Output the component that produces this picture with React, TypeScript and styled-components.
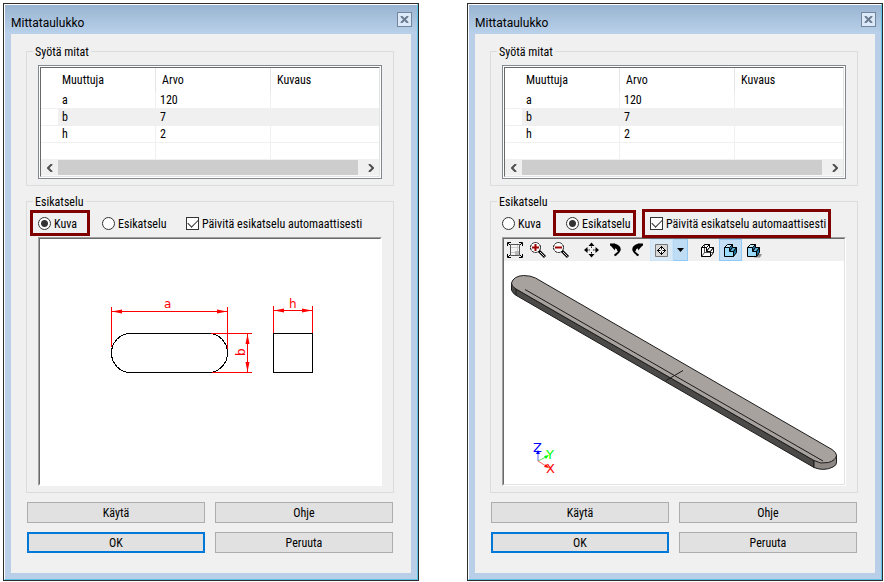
import React, { useId, useState } from "react";
import styled, { createGlobalStyle, css } from "styled-components";

const GlobalStyle = createGlobalStyle`
  * { box-sizing: border-box; }
  body {
    margin: 0;
    background: #fff;
    color: #000;
    font-family: "Roboto Condensed", Roboto, "Liberation Sans", sans-serif;
    font-size: 12px;
    line-height: 17px;
  }
`;

const Page = styled.main`
  display: grid;
  grid-template-columns: 1fr 1fr;
  gap: 48px;
  align-items: start;
  padding: 3px 1px 1px 3px;
`;

const Window = styled.section`
  min-width: 0;
  border: 1px solid #2b2b2b;
`;

const Frame = styled.div`
  border: 1px solid;
  border-color: #fff #5cc3e6 #5cc3e6 #fff;
  background: #b9cfe8;
`;

const TitleBar = styled.header`
  display: flex;
  align-items: center;
  justify-content: space-between;
  height: 29px;
  padding: 0 5px 0 6px;
  background: linear-gradient(#99b4d1, #b9d1ea);
`;

const Title = styled.h2`
  margin: 0;
  padding-top: 7px;
  font-family: Roboto, "Open Sans", sans-serif;
  font-size: 12px;
  font-weight: 400;
`;

const CloseButton = styled.button`
  display: grid;
  place-items: center;
  width: 15px;
  height: 15px;
  padding: 0;
  border: 1px solid #73859b;
  background: #dce9f8;
`;

const Body = styled.div`
  margin: 0 6px 6px;
  padding: 9px 17px 20px 15px;
  background: #f0f0f0;
`;

const Group = styled.fieldset`
  min-width: 0;
  margin: 0;
  padding: 0 11px 6px;
  border: 1px solid #dcdcdc;

  & + & { margin-top: 7px; }
`;

const Legend = styled.legend`
  margin-left: -5px;
  padding: 1px 2px 0;
  line-height: 16px;
`;

const ListBox = styled.div`
  margin-top: 5px;
  padding: 1px;
  border: 1px solid #828790;
  background: #fff;
`;

const ListInner = styled.div`
  border: 1px solid;
  border-color: #696969 #e3e3e3 #e3e3e3 #696969;
`;

const Table = styled.table`
  width: 100%;
  table-layout: fixed;
  border-collapse: separate;
  border-spacing: 0;
`;

const HeadCell = styled.th`
  height: 24px;
  padding: 0 6px;
  border-right: 1px solid #e5e5e5;
  font-weight: 400;
  text-align: left;
  &:first-child { width: 17px; border-right: 0; }
  &:nth-child(2) { width: 98px; padding-left: 4px; }
  &:nth-child(3) { width: 115px; }
  &:last-child { border-right: 0; }
`;

const Cell = styled.td<{ $selected?: boolean }>`
  height: 17px;
  padding: 0 4px;
  border-right: 1px solid #f0f0f0;
  border-bottom: 1px solid #f0f0f0;
  line-height: 16px;
  background: ${(p) => (p.$selected ? "#f0f0f0" : "#fff")};
  &:first-child { border-right: 0; }
  &:last-child { border-right: 0; }
`;

const ScrollBar = styled.div`
  display: flex;
  height: 16px;
  border-bottom: 1px solid #f8f8f8;
  background: #f0f0f0;
`;

const ScrollButton = styled.button`
  display: grid;
  place-items: center;
  width: 17px;
  padding: 0;
  border: 0;
  background: #f0f0f0;
`;

const Thumb = styled.div`
  flex: 1;
  margin-right: 4px;
  background: #cdcdcd;
`;

const Options = styled.div`
  display: grid;
  grid-template-columns: 64px 84px auto;
  align-items: center;
  justify-items: start;
  height: 27px;
`;

const Option = styled.label<{ $mark?: string }>`
  position: relative;
  display: flex;
  align-items: center;
  gap: 3px;
  white-space: nowrap;

  ${(p) =>
    p.$mark &&
    css`
      &::after {
        content: "";
        position: absolute;
        z-index: 1;
        inset: ${p.$mark};
        border: 3px solid #800000;
        pointer-events: none;
      }
    `}
`;

const Caption = styled.span`
  padding-top: 1px;
  line-height: 16px;
`;

const Radio = styled.input.attrs({ type: "radio" })`
  appearance: none;
  width: 13px;
  height: 13px;
  margin: 0;
  border: 1px solid #333;
  border-radius: 50%;
  background: #fff;
  &:checked { background: radial-gradient(circle, #333 0 3px, #fff 4px); }
`;

const CheckBox = styled.input.attrs({ type: "checkbox" })`
  appearance: none;
  display: grid;
  place-items: center;
  width: 13px;
  height: 13px;
  margin: 0;
  border: 1px solid #333;
  background: #fff;
  &:checked::after {
    content: "";
    width: 9px;
    height: 5px;
    margin-bottom: 3px;
    border: solid #333;
    border-width: 0 0 1px 1px;
    transform: rotate(-45deg);
  }
`;

const Preview = styled.div`
  border: 1px solid;
  border-color: #a0a0a0 #fff #fff #a0a0a0;
`;

const PreviewInner = styled.div<{ $edge: string }>`
  border: 1px solid;
  border-color: #696969 ${(p) => p.$edge} ${(p) => p.$edge} #696969;
  background: #fff;
`;

const Canvas = styled.svg`
  display: block;
  width: 100%;
  height: auto;
`;

const Toolbar = styled.div`
  display: flex;
  height: 22px;
  background: #f0f0f0;
`;

const Tool = styled.button<{ $tone?: "hover" | "active" | "menu" }>`
  display: grid;
  place-items: center;
  width: ${(p) => (p.$tone === "menu" ? 15 : 23)}px;
  padding: 0;
  border: 1px solid transparent;
  background: transparent;
  ${(p) => p.$tone === "hover" && "border-color: #cce4f7; background: #d9e9f6;"}
  ${(p) => p.$tone === "active" && "border-color: #90c8f6; background: #c4def5;"}
  ${(p) => p.$tone === "menu" && "border-color: #b0d6f5 #90c8f6 #90c8f6 #b8daf5; background: #bedcf3;"}
`;

const ToolGap = styled.span`
  width: 8px;
`;

const Buttons = styled.div`
  display: grid;
  grid-template-columns: 1fr 1fr;
  gap: 9px 10px;
  margin: 9px 1px 0;
`;

const Button = styled.button<{ $primary?: boolean }>`
  height: 21px;
  padding: 2px 0 0;
  border: ${(p) => (p.$primary ? "2px solid #0078d7" : "1px solid #adadad")};
  background: #e1e1e1;
  color: #000;
  font: inherit;
  line-height: 15px;
`;

const ToolIcon = ({ children }: { children: React.ReactNode }) => (
  <svg width="17" height="18" viewBox="0 0 17 18" fill="none" stroke="#000" aria-hidden="true">
    {children}
  </svg>
);

const FitIcon = () => (
  <ToolIcon>
    <path d="M.5 5V1.500H4M1 2l2 2M12 1.500h3.500V5M15 2l-2 2M.5 13v3.500H4M1 16l2-2M12 16.500h3.500V13M15 16l-2-2" />
    <path d="M3.500 3.500h9v11h-9z" stroke="#555" fill="#f4f4f4" />
    <path d="M4 6.500h8M10.500 4v7M4 11.500h6" stroke="#ccc" />
    <path d="M8 10h4v4H8z" fill="#bbb" stroke="none" />
  </ToolIcon>
);

const ZoomIcon = ({ plus }: { plus?: boolean }) => (
  <ToolIcon>
    <circle cx="5.500" cy="6.500" r="5" fill="#fff" strokeDasharray="2.500 .6" />
    <path d={plus ? "M2 6.500h7M5.500 3v7" : "M2 6.500h7"} stroke="#a00000" strokeWidth="2" />
    <path d="m9 10 6 6" strokeWidth="3" />
    <path d="m10 11 4.500 4.500" stroke="#ddd" />
  </ToolIcon>
);

const MoveIcon = () => (
  <ToolIcon>
    <path d="M7.500 1.500 10.500 5h-6zM7.500 16.500l-3-3.500h6zM0 9l3.500-3v6zM15 9l-3.500-3v6z" fill="#000" stroke="none" />
    <path d="M7.500 4v3M7.500 11v3M3 9h3M9 9h3" strokeDasharray="1.500 .7" />
  </ToolIcon>
);

const RotateIcon = ({ mirrored }: { mirrored?: boolean }) => (
  <ToolIcon>
    <g transform={mirrored ? "translate(16 0) scale(-1 1)" : undefined}>
      <path d="M8 2.500v7L3 4z" fill="#000" stroke="none" />
      <path d="M3 3.500h4c4 1 6.500 3 5.500 6-.7 2-2.500 3.500-5 5" strokeWidth="2" />
      <path d="M7 5.500c3 .5 5 2 4.500 4.500" strokeWidth="3" />
    </g>
  </ToolIcon>
);

const TargetIcon = () => (
  <ToolIcon>
    <path d="M2.500 3.500h12v12h-12z" fill="#d8d8d8" stroke="#777" />
    <path d="m8.500 5.500 4 4-4 4-4-4z" fill="#fff" />
    <path d="M8.500 5v9M4 9.500h9" />
    <path d="M7.500 8.500h2v2h-2z" fill="#fff" stroke="none" />
  </ToolIcon>
);

const CubeIcon = ({ solid, shadow }: { solid?: boolean; shadow?: boolean }) => (
  <ToolIcon>
    {shadow && <path d="M9 16.500h6l2-3.500h-4z" fill="#909090" stroke="none" />}
    <g strokeLinejoin="round">
      <path d="m2.500 6.500 3-3h5l-3 3z" fill={solid ? "#c4ecff" : "#fff"} />
      <path d="m7.500 6.500 3-3v3l-3 4z" fill={solid ? "#176f98" : "#fff"} />
      <path d="m7.500 10.500 3-4h4l-3 4z" fill={solid ? "#5fb4d9" : "#fff"} />
      <path d="m11.500 10.500 3-4v5l-3 4z" fill={solid ? "#176f98" : "#fff"} />
      <path d="M2.500 6.500h5v4h4v5h-9z" fill={solid ? "#9bdcfb" : "#fff"} />
      {!solid && <path d="m2.500 15.500 3-4h9M5.500 3.500v8" strokeWidth=".7" />}
    </g>
  </ToolIcon>
);

const PartDrawing = () => (
  <Canvas viewBox="0 0 340 245" role="img" aria-label="Mittakuva" fill="none">
    <g stroke="#000" shapeRendering="crispEdges">
      <path d="M90.500 94.500h78a19 19.500 0 0 1 19 19.500a19 19.500 0 0 1-19 19.500h-78a19 19.500 0 0 1-19-19.500a19 19.500 0 0 1 19-19.500z" />
      <path d="M233.500 94.500h39v39h-39z" />
    </g>
    <g fill="#f00" shapeRendering="crispEdges">
      <path d="M71 68h1v40h-1zM187 68h1v42h-1zM72 72h115v1H72z" />
      <path d="M171 94h41v1h-41zM172 133h40v1h-40zM207 95h1v38h-1z" />
      <path d="M233 67h1v27h-1zM272 67h1v27h-1zM234 71h38v1h-38z" />
    </g>
    <g fill="#f00">
      <path d="m72 72.500 10-2v4zM187 72.500l-10-2v4zM207.500 95l-2 10h4zM207.500 133l-2-10h4zM234 71.500l10-2v4zM272 71.500l-10-2v4z" />
      <g fontFamily="DejaVu Sans" fontSize="12">
        <text x="124" y="69">a</text>
        <text x="249" y="69">h</text>
        <text transform="translate(205 117) rotate(-90)">b</text>
      </g>
    </g>
  </Canvas>
);

const PartModel = () => (
  <Canvas viewBox="504 261 340 223" role="img" aria-label="Esikatselu" fill="none">
    <g stroke="#1c1c1c" strokeLinejoin="round">
      <path d="M511.500 283v7q1 3 4 5L814 467.500v-7L516 289z" fill="#4b4a48" />
      <path d="M814 460v7.500q10 4 19-.5q4-2 3.500-5v-7z" fill="#8e8884" />
      <path
        d="M516 289q-5-3-4.500-6q2-7 12-7.500q7 0 12 2.500L832 449.500q4.500 3 4.500 6q-1 5-8 7q-8 2-14.500-2z"
        fill="#a8a29e"
      />
      <path d="M516 289v6M525 289.500 823 461M666 380.500l17-10" />
    </g>
    <path d="M538 461v-9" stroke="#aab0ff" strokeWidth="2" />
    <path d="m538 461 8-4" stroke="#60d860" />
    <path d="m538 461 8 5" stroke="#ff6060" />
    <path d="M538 450l-2 4h4z" fill="#00f" />
    <path d="m549 455-5 1 2 3z" fill="#0f0" />
    <path d="m549 468-5-1 2-3z" fill="#f00" />
    <g fontFamily="DejaVu Sans" fontSize="13">
      <text x="533" y="452" fill="#00f">Z</text>
      <text x="546" y="459" fill="#0f0">Y</text>
      <text x="546" y="473" fill="#f00">X</text>
    </g>
  </Canvas>
);

const ModelToolbar = () => (
  <Toolbar role="toolbar">
    <Tool aria-label="Sovita"><FitIcon /></Tool>
    <Tool aria-label="Suurenna"><ZoomIcon plus /></Tool>
    <Tool aria-label="Pienennä"><ZoomIcon /></Tool>
    <ToolGap />
    <Tool aria-label="Siirrä"><MoveIcon /></Tool>
    <Tool aria-label="Kierrä vasemmalle"><RotateIcon /></Tool>
    <Tool aria-label="Kierrä oikealle"><RotateIcon mirrored /></Tool>
    <Tool aria-label="Keskitä" $tone="hover"><TargetIcon /></Tool>
    <Tool aria-label="Valikko" $tone="menu">
      <svg width="7" height="4" viewBox="0 0 7 4" aria-hidden="true"><path d="M0 0h7L3.500 4z" /></svg>
    </Tool>
    <ToolGap />
    <Tool aria-label="Rautalanka"><CubeIcon /></Tool>
    <Tool aria-label="Varjostettu" $tone="active"><CubeIcon solid /></Tool>
    <Tool aria-label="Varjo"><CubeIcon solid shadow /></Tool>
  </Toolbar>
);

const rows = [
  { name: "a", value: "120" },
  { name: "b", value: "7", selected: true },
  { name: "h", value: "2" },
  { name: "", value: "" },
];

type Mode = "image" | "model";

interface DialogProps {
  initialMode: Mode;
  imageMark?: string;
  modelMark?: string;
  autoMark?: string;
}

const DimensionDialog = ({ initialMode, imageMark, modelMark, autoMark }: DialogProps) => {
  const [mode, setMode] = useState<Mode>(initialMode);
  const id = useId();

  return (
    <Window>
      <Frame>
        <TitleBar>
          <Title>Mittataulukko</Title>
          <CloseButton aria-label="Sulje">
            <svg width="9" height="7" viewBox="0 0 9 7" stroke="#6b7b90" strokeWidth="2" aria-hidden="true">
              <path d="m1 0 7 7M8 0 1 7" />
            </svg>
          </CloseButton>
        </TitleBar>
        <Body>
          <Group>
            <Legend>Syötä mitat</Legend>
            <ListBox>
              <ListInner>
                <Table>
                  <thead>
                    <tr>
                      <HeadCell />
                      <HeadCell scope="col">Muuttuja</HeadCell>
                      <HeadCell scope="col">Arvo</HeadCell>
                      <HeadCell scope="col">Kuvaus</HeadCell>
                    </tr>
                  </thead>
                  <tbody>
                    {rows.map((row, i) => (
                      <tr key={i}>
                        <Cell />
                        <Cell $selected={row.selected}>{row.name}</Cell>
                        <Cell $selected={row.selected}>{row.value}</Cell>
                        <Cell $selected={row.selected} />
                      </tr>
                    ))}
                  </tbody>
                </Table>
                <ScrollBar>
                  <ScrollButton aria-label="Vieritä vasemmalle">
                    <svg width="6" height="8" viewBox="0 0 6 8" fill="none" stroke="#505050" strokeWidth="2" aria-hidden="true">
                      <path d="M5 0 1 4l4 4" />
                    </svg>
                  </ScrollButton>
                  <Thumb />
                  <ScrollButton aria-label="Vieritä oikealle">
                    <svg width="6" height="8" viewBox="0 0 6 8" fill="none" stroke="#505050" strokeWidth="2" aria-hidden="true">
                      <path d="m1 0 4 4-4 4" />
                    </svg>
                  </ScrollButton>
                </ScrollBar>
              </ListInner>
            </ListBox>
          </Group>
          <Group>
            <Legend>Esikatselu</Legend>
            <Options>
              <Option $mark={imageMark}>
                <Radio name={id} checked={mode === "image"} onChange={() => setMode("image")} />
                <Caption>Kuva</Caption>
              </Option>
              <Option $mark={modelMark}>
                <Radio name={id} checked={mode === "model"} onChange={() => setMode("model")} />
                <Caption>Esikatselu</Caption>
              </Option>
              <Option $mark={autoMark}>
                <CheckBox defaultChecked />
                <Caption>Päivitä esikatselu automaattisesti</Caption>
              </Option>
            </Options>
            <Preview>
              <PreviewInner $edge={mode === "model" ? "#e3e3e3" : "#fff"}>
                {mode === "model" ? (
                  <>
                    <ModelToolbar />
                    <PartModel />
                  </>
                ) : (
                  <PartDrawing />
                )}
              </PreviewInner>
            </Preview>
          </Group>
          <Buttons>
            <Button>Käytä</Button>
            <Button>Ohje</Button>
            <Button $primary>OK</Button>
            <Button>Peruuta</Button>
          </Buttons>
        </Body>
      </Frame>
    </Window>
  );
};

export default function App() {
  return (
    <>
      <GlobalStyle />
      <Page>
        <DimensionDialog initialMode="image" imageMark="-5px -13px -4px -8px" />
        <DimensionDialog initialMode="model" modelMark="-5px -5px -4px -13px" autoMark="-6px -5px -6px -8px" />
      </Page>
    </>
  );
}
